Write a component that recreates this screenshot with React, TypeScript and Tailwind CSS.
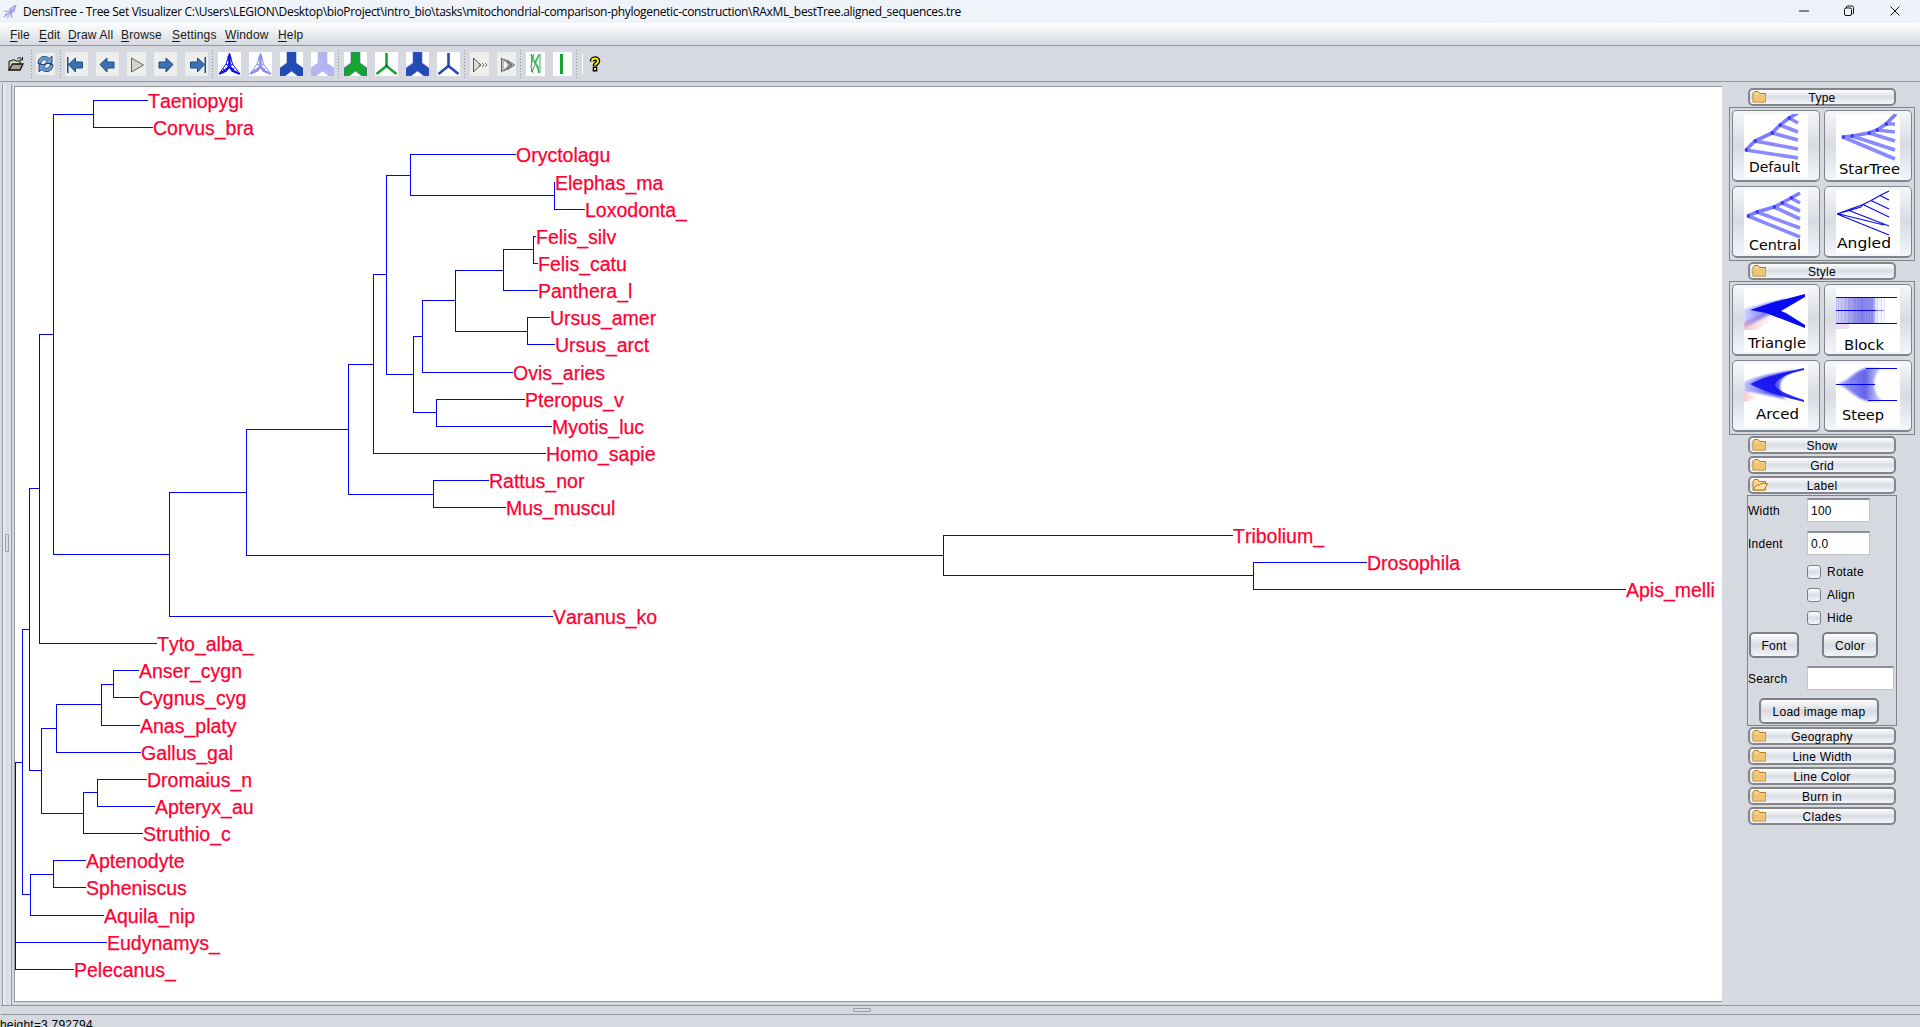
import React from "react";

const BLUE = "#0000ff";

// Leaves: label, y, branch start x, branch end x
const leaves: [string, number, number, number][] = [
  ["Taeniopygi", 100, 93, 147],
  ["Corvus_bra", 127, 93, 152],
  ["Oryctolagu", 154, 410, 515],
  ["Elephas_ma", 182, 554, 554],
  ["Loxodonta_", 209, 554, 584],
  ["Felis_silv", 236, 533, 535],
  ["Felis_catu", 263, 533, 537],
  ["Panthera_l", 290, 503, 537],
  ["Ursus_amer", 317, 527, 549],
  ["Ursus_arct", 344, 527, 554],
  ["Ovis_aries", 372, 422, 512],
  ["Pteropus_v", 399, 436, 524],
  ["Myotis_luc", 426, 436, 551],
  ["Homo_sapie", 453, 373, 545],
  ["Rattus_nor", 480, 433, 488],
  ["Mus_muscul", 507, 433, 505],
  ["Tribolium_", 535, 943, 1232],
  ["Drosophila", 562, 1253, 1366],
  ["Apis_melli", 589, 1253, 1625],
  ["Varanus_ko", 616, 169, 552],
  ["Tyto_alba_", 643, 39, 156],
  ["Anser_cygn", 670, 113, 138],
  ["Cygnus_cyg", 697, 113, 138],
  ["Anas_platy", 725, 101, 139],
  ["Gallus_gal", 752, 56, 140],
  ["Dromaius_n", 779, 97, 146],
  ["Apteryx_au", 806, 97, 154],
  ["Struthio_c", 833, 83, 142],
  ["Aptenodyte", 860, 53, 85],
  ["Spheniscus", 887, 53, 85],
  ["Aquila_nip", 915, 30, 103],
  ["Eudynamys_", 942, 15, 106],
  ["Pelecanus_", 969, 15, 73],
];

// Inner nodes: x, top y, bottom y, parent x, y of the branch to the parent
const nodes: [number, number, number, number, number][] = [
  [93, 100, 127, 53, 114],
  [53, 114, 554, 39, 334],
  [39, 334, 643, 29, 488],
  [29, 488, 770, 22, 629],
  [22, 629, 894, 15, 762],
  [15, 762, 969, 15, 762],
  [169, 492, 616, 53, 554],
  [246, 429, 555, 169, 492],
  [348, 364, 494, 246, 429],
  [373, 274, 453, 348, 364],
  [386, 175, 374, 373, 274],
  [410, 154, 195, 386, 175],
  [554, 182, 209, 410, 195],
  [413, 336, 412, 386, 374],
  [422, 300, 372, 413, 336],
  [455, 270, 331, 422, 300],
  [503, 249, 290, 455, 270],
  [533, 236, 263, 503, 249],
  [527, 317, 344, 455, 331],
  [436, 399, 426, 413, 412],
  [433, 480, 507, 348, 494],
  [943, 535, 575, 246, 555],
  [1253, 562, 589, 943, 575],
  [113, 670, 697, 101, 684],
  [101, 684, 725, 56, 704],
  [56, 704, 752, 41, 728],
  [41, 728, 813, 29, 770],
  [83, 792, 833, 41, 813],
  [97, 779, 806, 83, 792],
  [30, 874, 915, 22, 894],
  [53, 860, 887, 30, 874],
];

function Tree() {
  return (
    <svg width="1707" height="914" viewBox="15 87 1707 914" className="block">
      <g shapeRendering="crispEdges" fill={BLUE}>
        {nodes.map(([x, y1, y2, px, py], i) => (
          <g key={i}>
            <rect x={x} y={y1} width="1" height={y2 - y1 + 1} />
            <rect x={px} y={py} width={x - px + 1} height="1" />
          </g>
        ))}
        {leaves.map(([l, y, x1, x2]) => (
          <rect key={l} x={x1} y={y} width={x2 - x1 + 1} height="1" />
        ))}
      </g>
      <g fill="#ff0033" fontFamily="'Liberation Sans', Arial, sans-serif" fontSize="19.5" className="[font-kerning:none]" stroke="#ff0033" strokeWidth="0.25">
        {leaves.map(([l, y, , x2]) => (
          <text key={l} x={x2 + 1} y={y + 8}>{l}</text>
        ))}
      </g>
    </svg>
  );
}

/* ---------- toolbar ---------- */

function Sep({ after = "mr-[5px]" }: { after?: string }) {
  return <div className={`ml-1 ${after} h-[28px] w-[1px] bg-[repeating-linear-gradient(to_bottom,#8e939e_0_1px,transparent_1px_3px)]`} />;
}

function GroupSep() {
  return (
    <div className="-ml-2 flex">
      <Sep />
    </div>
  );
}

function Icon({ w = 23, bg = "#ffffff", children }: { w?: number; bg?: string; children: React.ReactNode }) {
  return (
    <svg width={w} height="24" viewBox={`0 0 ${w} 24`} className="mr-2 block shrink-0">
      <rect width={w} height="24" fill={bg} />
      {children}
    </svg>
  );
}

const ARROW = "M1 11.5 8 5v4h7v6H8v4z";

function Arrow({ right = false, bar = false }: { right?: boolean; bar?: boolean }) {
  return (
    <Icon bg="#eeeeec">
      <g transform={right ? "translate(23 0) scale(-1 1)" : undefined}>
        <path d={ARROW} transform={bar ? "translate(2.5 1)" : "translate(3 1)"} fill="#3a72b4" stroke="#1f4b85" strokeWidth="1" />
        {bar && <rect x="2" y="5" width="1.5" height="16" fill="#1f4b85" />}
      </g>
    </Icon>
  );
}

function Densi({ color }: { color: string }) {
  return (
    <Icon>
      <g stroke={color} fill="none" strokeWidth="1">
        <path d="M11.5 1 8 12 1 22M11.5 1l3 11 7.5 10M11.5 2v11M10 4l2 9-10 9M13 5l-3 9 11 8M9.500 8l4 5M13.500 9l-4 4M8 12l4 4 8 6M15 12l-5 4-8 5M5 17l3 3M3 19l3 2M16 16l-2 4M19 19l-3 2" />
        <path d="M1 22l7-3 3.500-4 3 4 7.500 3M11.500 5v9l-4 4M11.500 14l4 4" strokeWidth="1.6" />
      </g>
    </Icon>
  );
}

function Fat({ color, edge }: { color: string; edge: string }) {
  return (
    <Icon>
      <path d="M7 0h9v11l7 5v8h-5l-6.500-5L5 24H0v-8l7-5z" fill={color} stroke={edge} strokeWidth="0.6" />
    </Icon>
  );
}

function Thin({ color }: { color: string }) {
  return (
    <Icon>
      <path d="M11.5 1v13M11.5 14 1.500 22M11.500 14l10 8" stroke={color} strokeWidth="2.6" fill="none" />
      <path d="M10 13h3l-1.500 2z" fill="#2222cc" />
    </Icon>
  );
}

function Toolbar() {
  return (
    <div className="flex h-[36px] shrink-0 items-center border-b border-[#9297a1] bg-[#d6d9e0] pt-[1px]">
      <svg width="17" height="16" viewBox="0 0 17 16" className="ml-2 mr-[2px] shrink-0">
        <path d="M1 14V5h2l1-1h3l1 1h4v3" fill="#d8d8c0" stroke="#111" />
        <path d="M1 14 4.500 8H15l-3 6z" fill="#a5a590" stroke="#111" strokeWidth="1.3" />
        <path d="M9 3c2-2 4-1.500 5 .5M14.500 1v3h-3" fill="none" stroke="#111" />
      </svg>
      <Sep after="mr-1" />
      <svg width="19" height="22" viewBox="0 0 19 22" className="block shrink-0">
        <rect width="19" height="22" fill="#eeeeec" />
        <path d="M2 10.500C2 3.500 9 1.500 13.500 5.500l2.500-2.500v7.500H9l2.500-2.500C8.500 5.500 5.500 7 5 10.500zM17 11.500c0 7-7 9-11.500 5L3 19v-7.500h7L7.500 14c3 2.500 6 1 6.500-2.500z" fill="#6f9cd0" stroke="#1f4b85" strokeWidth="1" />
      </svg>
      <div className="ml-[1px] flex"><Sep after="mr-1" /></div>
      <Arrow bar />
      <Arrow />
      <Icon w={19} bg="#eeeeec">
        <path d="M4.500 6v14l12-7z" fill="#d2d2d0" stroke="#666" />
      </Icon>
      <Arrow right />
      <Arrow right bar />
      <GroupSep />
      <Densi color="#0b0bf0" />
      <Densi color="#8c8cf0" />
      <Fat color="#224cb4" edge="#224cb4" />
      <Fat color="#b4b4f0" edge="#b4b4f0" />
      <GroupSep />
      <Fat color="#18a52e" edge="#5050e0" />
      <Thin color="#18a52e" />
      <Fat color="#224cb4" edge="#6060f0" />
      <Thin color="#224cb4" />
      <GroupSep />
      <Icon w={19} bg="#eeeeec">
        <path d="M3.500 6v14l7-7z" fill="#ddd" stroke="#555" />
        <path d="m9 11 2 2-2 2M12 11l2 2-2 2M15 11l2 2-2 2" fill="none" stroke="#666" strokeWidth="0.9" />
      </Icon>
      <Icon w={19} bg="#eeeeec">
        <path d="M4.500 6v14l9-7zM10 8l7.500 5L10 18M7 7l8 6-8 6" fill="#bbb" stroke="#666" />
      </Icon>
      <GroupSep />
      <Icon w={19}>
        <path d="M5 2l1 7-1 6 2 6M8 2l-2 6 5 6 2 7M13 2l-4 8 4 6-1 5M14 2v19M5.500 2v18M6 3l7 17M13 3 6 20" fill="none" stroke="#30b050" strokeWidth="1" />
      </Icon>
      <Icon w={19}>
        <rect x="7" y="2" width="3" height="20" fill="#18a52e" />
      </Icon>
      <GroupSep />
      <div className="h-[22px] w-[1px] bg-white" />
      <svg width="12" height="16" viewBox="0 0 12 16" className="ml-[6px]">
        <path d="M3 5.500C3 1.500 9 1.500 9 5c0 2.500-3 2.500-3 5" fill="none" stroke="#000" strokeWidth="4.600" />
        <rect x="3.700" y="10.500" width="4.600" height="5" fill="#000" />
        <path d="M3 5.500C3 1.500 9 1.500 9 5c0 2.500-3 2.500-3 4.500" fill="none" stroke="#ffee00" strokeWidth="2" />
        <rect x="5" y="12" width="2" height="2" fill="#ffee00" />
      </svg>
    </div>
  );
}

/* ---------- side panel ---------- */

function Folder({ open = false }: { open?: boolean }) {
  return (
    <svg width="16" height="14" viewBox="0 0 16 14" className="absolute left-[2px] top-0">
      <path d="M1 12V3.500L2.500 1.500H6L7.500 3.500H13.500V12z" fill="#f7d58a" stroke="#b8741a" />
      {open ? (
        <path d="M1 12 4 7.500l4-.5 1-1.500h6.500L12.500 12z" fill="#fbe3a6" stroke="#b8741a" />
      ) : (
        <path d="M1.500 5h12v6.500h-12z" fill="#efc573" />
      )}
    </svg>
  );
}

function Header({ label, open = false }: { label: string; open?: boolean }) {
  return (
    <div className="relative mx-auto mb-[2px] flex h-[18px] w-[148px] items-center justify-center rounded-[5px] border-2 border-[#838588] bg-linear-to-b from-white via-[#dadde4] to-[#f4f6fc] pt-[2px] text-[12px] leading-none tracking-[0.25px]">
      <Folder open={open} />
      <span>{label}</span>
    </div>
  );
}

function Tile({ children, label, x, y, w }: { children: React.ReactNode; label: string; x: number; y: number; w: number }) {
  return (
    <div className="flex h-[72px] w-[88px] justify-center rounded-[5px] border border-b-2 border-[#7f848d] bg-linear-to-b from-[#f6f7f9] via-[#d8dbe2] to-[#f4f6fc] pt-[3px] tracking-normal">
      <svg width="64" height="64" viewBox="0 0 64 64" className="block">
        <rect width="64" height="64" fill="#fff" />
        {children}
        <text x={x} y={y} textLength={w} lengthAdjust="spacingAndGlyphs" fontSize="14" fontFamily="'DejaVu Sans', sans-serif" fill="#000">{label}</text>
      </svg>
    </div>
  );
}

function Fan({ trunk, tips }: { trunk: [number, number][]; tips: [number, number][] }) {
  return (
    <g>
      <g stroke="#8a8aff" strokeWidth="3.600" fill="none">
        <polyline points={trunk.map((p) => p.join(",")).join(" ")} stroke="#7d7dff" />
        {tips.map(([a, b], i) => (
          <line key={i} x1={trunk[i][0]} y1={trunk[i][1]} x2={a} y2={b} />
        ))}
      </g>
      {trunk.slice(0, 5).map(([a, b], i) => (
        <rect key={i} x={a - 1.2} y={b - 1.6} width="3" height="3.200" fill="#3434ff" />
      ))}
    </g>
  );
}

const STRIPES = [0, 2, 5, 9, 12, 13, 15, 17, 18, 19, 21, 22, 24, 25, 26, 27, 28, 30, 31, 33, 35, 36, 38, 41, 45, 48];

function Panel({ children }: { children: React.ReactNode }) {
  return (
    <div className="ml-[7px] mb-[1px] grid h-[154px] w-[186px] grid-cols-[88px_88px] content-start gap-1 border border-[#7f8286] py-[2px] pl-[2px]">{children}</div>
  );
}

const BTN = "flex items-center justify-center rounded-[5px] border-2 border-[#7d8085] bg-linear-to-b from-white via-[#d8dbe2] to-[#f2f4fa] pt-[1px]";
const INPUT = "flex items-center border border-t-2 border-[#c3c5ca] border-t-[#8c8f94] bg-white pl-[3px]";

function Check({ label }: { label: string }) {
  return (
    <div className="ml-[59px] flex h-[23px] items-center">
      <span className="h-[14px] w-[14px] rounded-[3px] border border-[#7a7f88] bg-linear-to-b from-white via-[#dadde4] to-[#f4f6fc]" />
      <span className="ml-[6px]">{label}</span>
    </div>
  );
}

function Side() {
  return (
    <div className="w-[198px] shrink-0 pt-[5px] text-[12px] leading-none tracking-[0.25px]">
      <div className="-mb-[1px] w-[200px]"><Header label="Type" /></div>
      <Panel>
        <Tile label="Default" x={5} y={58} w={51}>
          <Fan trunk={[[2, 36], [11, 27], [28, 19], [36, 11], [45, 4], [54, -1]]} tips={[[54, 44], [54, 35], [54, 26], [54, 18], [54, 9]]} />
        </Tile>
        <Tile label="StarTree" x={3} y={60} w={61}>
          <Fan trunk={[[7, 23], [16, 22], [33, 19], [41, 16], [50, 10], [60, 0]]} tips={[[59, 45], [59, 36], [59, 27], [59, 18], [59, 10]]} />
        </Tile>
        <Tile label="Central" x={5} y={60} w={52}>
          <Fan trunk={[[4, 26], [13, 22], [30, 17], [38, 13], [47, 8], [56, 3]]} tips={[[56, 47], [56, 38], [56, 29], [56, 21], [56, 13]]} />
        </Tile>
        <Tile label="Angled" x={1} y={58} w={54}>
          <path d="M1 24 27 14.500 35 10.500 44 5.500 53 1M44 5.500l9 4.500M35 10.500 53 19M27 14.500 53 27M13 20.500 53 36M1 24l52 21M1 23.500 48 35M1 24l24-7 2-2.500" stroke="#0a0af0" strokeWidth="1.200" fill="none" />
        </Tile>
      </Panel>
      <div className="-mb-[1px] w-[200px]"><Header label="Style" /></div>
      <Panel>
        <Tile label="Triangle" x={4} y={60} w={58}>
          <defs>
            <filter id="haze" x="-20%" y="-20%" width="140%" height="140%"><feGaussianBlur stdDeviation="1.3" /></filter>
            <linearGradient id="arm" x1="0" x2="1"><stop offset="0" stopColor="#2020ff" stopOpacity="0.35" /><stop offset="0.5" stopColor="#1010f0" stopOpacity="0.9" /><stop offset="1" stopColor="#0000ff" /></linearGradient>
            <linearGradient id="pink" x1="0" x2="1"><stop offset="0" stopColor="#f08080" stopOpacity="0.4" /><stop offset="1" stopColor="#f08080" stopOpacity="0" /></linearGradient>
          </defs>
          <path d="M0 34v8h12l22-15-10-4z" fill="url(#pink)" />
          <path d="M0 21 40 11 46 15 30 24 8 36 0 40z" fill="url(#arm)" opacity="0.6" filter="url(#haze)" />
          <path d="M61 6 30 14 6 22l16 3 39 15v-3L42 25l-5-2L61 9z" fill="#0a0af2" />
        </Tile>
        <Tile label="Block" x={8} y={62} w={40}>
          <defs>
            <linearGradient id="block" x1="0" x2="1"><stop offset="0" stopColor="#4040e0" stopOpacity="0.2" /><stop offset="0.5" stopColor="#3c3ce0" stopOpacity="0.6" /><stop offset="0.75" stopColor="#4040e0" stopOpacity="0.55" /><stop offset="0.82" stopColor="#4040e0" stopOpacity="0.1" /><stop offset="1" stopColor="#4040e0" stopOpacity="0" /></linearGradient>
          </defs>
          <rect x="0" y="9" width="49" height="27" fill="url(#block)" />
          {STRIPES.map((s) => (
            <rect key={s} x={s} y="9" width="0.7" height="27" fill="#5050d8" opacity="0.25" />
          ))}
          <path d="M0 9.500h61M0 22.500h40M0 35.500h61" stroke="#0000e6" />
          <path d="M40 22.500h8" stroke="#8080f0" />
          <path d="M0 38.500h13" stroke="#eedcf4" strokeWidth="5" />
        </Tile>
        <Tile label="Arced" x={12} y={55} w={43}>
          <path d="M0 28v10l16-4z" fill="url(#pink)" />
          <path d="M50 6C34 9 14 12 0 18v10c12 0 28 4 42 7-6-5-6-9-6-14s4-9 14-15z" fill="url(#arm)" opacity="0.75" filter="url(#haze)" />
          <path d="M60 4C42 8 22 12 6 20c12 7 34 13 54 18v-2C48 32 33 27 31 21 32 14 46 9 60 6z" fill="#1212ee" opacity="0.9" />
        </Tile>
        <Tile label="Steep" x={6} y={56} w={42}>
          <defs>
            <linearGradient id="steep" x1="0" x2="1"><stop offset="0" stopColor="#2020f0" stopOpacity="0.4" /><stop offset="0.6" stopColor="#3030e0" stopOpacity="0.75" /><stop offset="1" stopColor="#4040e0" stopOpacity="0.15" /></linearGradient>
          </defs>
          <path d="M2 20C12 17 19 7 30 4h16c-6 4-8 10-8 16s2 12 9 17H31C19 34 12 24 2 20z" fill="url(#steep)" filter="url(#haze)" />
          <path d="M30 4.500h31M0 20.500h39M32 36.500h29" stroke="#0000f0" />
        </Tile>
      </Panel>
      <div className="w-[200px]">
        <Header label="Show" />
        <Header label="Grid" />
        <Header label="Label" open />
        <div className="ml-[25px] -mt-[1px] mb-[1px] h-[231px] w-[150px] border border-[#7f8286] pt-[2px]">
          <div className="flex h-[24px] items-center"><span className="w-[59px] pt-[2px]">Width</span><span className={`${INPUT} h-[24px] w-[63px]`}>100</span></div>
          <div className="mt-[9px] flex h-[24px] items-center"><span className="w-[59px] pt-[2px]">Indent</span><span className={`${INPUT} h-[24px] w-[63px]`}>0.0</span></div>
          <div className="mt-[5px]"><Check label="Rotate" /><Check label="Align" /><Check label="Hide" /></div>
          <div className="mt-[3px] flex"><span className={`${BTN} ml-[1px] h-[26px] w-[50px]`}>Font</span><span className={`${BTN} ml-[23px] h-[26px] w-[56px]`}>Color</span></div>
          <div className="mt-[8px] flex h-[24px] items-center"><span className="w-[59px] pt-[2px]">Search</span><span className={`${INPUT} h-[24px] w-[87px]`} /></div>
          <div className={`${BTN} ml-[11px] mt-[8px] h-[26px] w-[120px]`}>Load image map</div>
        </div>
        {["Geography", "Line Width", "Line Color", "Burn in", "Clades"].map((t) => (
          <Header key={t} label={t} />
        ))}
      </div>
    </div>
  );
}

const MENU: [string, string][] = [
  ["File", "w-[29px]"],
  ["Edit", "w-[29px]"],
  ["Draw All", "w-[53px]"],
  ["Browse", "w-[51px]"],
  ["Settings", "w-[53px]"],
  ["Window", "w-[53px]"],
  ["Help", "w-[40px]"],
];

export default function App() {
  return (
    <div className="flex h-[1027px] w-[1920px] flex-col overflow-hidden bg-[#d6d9e0] font-['Liberation_Sans',Arial,sans-serif] text-black">
      <div className="flex h-[23px] shrink-0 items-center bg-linear-to-r from-[#f0f4f9] to-[#eef2fb]">
        <svg width="14" height="14" viewBox="0 0 14 14" className="ml-[3px]">
          <path d="M1 12 6 8l2-5 5-3-2 6-3 2 1 5M2 10l6-3 4-5M1 6l5 1 3-3M4 13l4-5M6 4l5 1" fill="none" stroke="#9a9af0" strokeWidth="1.1" />
        </svg>
        <span className="ml-[6px] whitespace-nowrap pt-[1px] font-['Open_Sans',sans-serif] text-[12px] leading-none tracking-[-0.32px]">DensiTree - Tree Set Visualizer C:\Users\LEGION\Desktop\bioProject\intro_bio\tasks\mitochondrial-comparison-phylogenetic-construction\RAxML_bestTree.aligned_sequences.tre</span>
        <svg width="120" height="20" viewBox="0 0 120 20" className="ml-auto mr-[10px]" fill="none" stroke="#111">
          <path d="M9 9h10" />
          <rect x="54.500" y="6" width="7" height="7.500" rx="1.5" />
          <path d="M56.500 6V5q0-1 1-1h4.500q1.500 0 1.500 1.500V11q0 1-1 1" />
          <path d="m100.500 4.500 9 9M109.500 4.500l-9 9" />
        </svg>
      </div>
      <div className="flex h-[23px] shrink-0 items-center border-b border-[#9297a1] bg-linear-to-b from-white to-[#d6d9e0] pl-[10px] pt-[2px] text-[12px] leading-none tracking-[0.15px] text-[#1a1a1a]">
        {MENU.map(([m, w]) => (
          <span key={m} className={`${w} whitespace-nowrap`}><u className="underline-offset-2">{m[0]}</u>{m.slice(1)}</span>
        ))}
      </div>
      <Toolbar />
      <div className="flex h-[923px] shrink-0 pt-[1px]">
        <div className="flex w-[14px] shrink-0 items-center border-t border-[#d6d9e0] pl-[2px]">
          <div className="flex h-full w-[10px] items-center justify-center border-x border-[#9297a1] bg-linear-to-r from-[#eef0f4] via-[#d6d9e0] to-[#e4e6ec]">
            <div className="mb-[3px] h-[18px] w-[4px] rounded-[1px] border border-[#9a9ea8]" />
          </div>
        </div>
        <div className="mt-[3px] h-[916px] w-[1708px] shrink-0 border-y border-l border-[#9297a1] bg-white">
          <Tree />
        </div>
        <Side />
      </div>
      <div className="ml-[1px] flex h-[10px] shrink-0 items-center justify-center border-y border-[#9297a1] pr-[197px]">
        <div className="h-[4px] w-[18px] rounded-[1px] border border-[#9a9ea8]" />
      </div>
      <div className="h-[12px] shrink-0 overflow-hidden pt-[3px] text-[12px] leading-[14px] tracking-[0.2px]">height=3.792794</div>
    </div>
  );
}
